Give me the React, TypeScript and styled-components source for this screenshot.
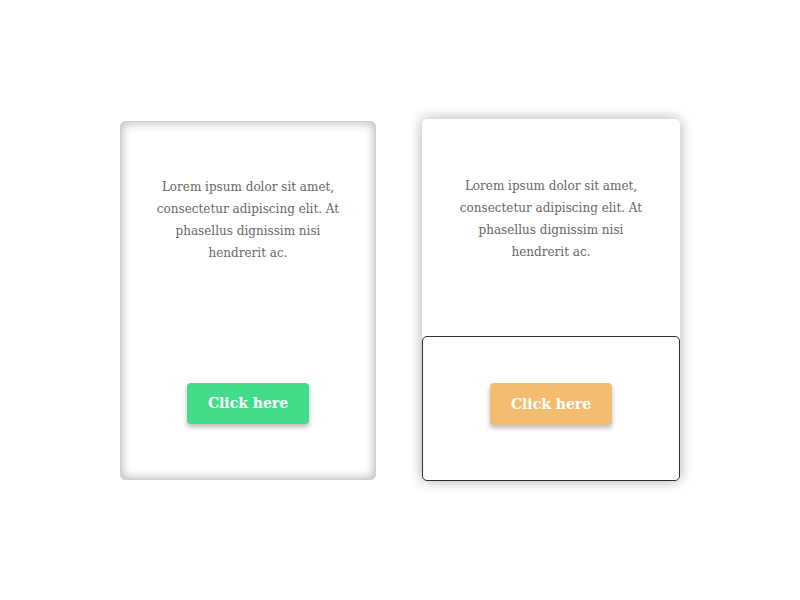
import React from "react";
import styled, { createGlobalStyle } from "styled-components";

const Global = createGlobalStyle`
  html, body { margin: 0; padding: 0; background: #fff; }
  body { font-family: "DejaVu Serif", "Liberation Serif", serif; }
`;

const Page = styled.div`
  width: 800px;
  height: 600px;
  display: flex;
  align-items: center;
  justify-content: center;
  gap: 46px;
`;

const Card = styled.div<{ $variant: "inset" | "raised" }>`
  box-sizing: border-box;
  width: ${(p) => (p.$variant === "inset" ? "256px" : "258px")};
  height: ${(p) => (p.$variant === "inset" ? "359px" : "362px")};
  border-radius: 5px;
  background: #fff;
  display: flex;
  flex-direction: column;
  ${(p) =>
    p.$variant === "inset"
      ? `border: 1px solid #d0d0d0; box-shadow: inset 0 0 11px rgba(0,0,0,0.32);`
      : `box-shadow: 0 0 14px rgba(0,0,0,0.32);`}
`;

const Body = styled.div<{ $top: number }>`
  flex: 1;
  padding: ${(p) => p.$top}px 24px 0;
  display: flex;
  justify-content: center;
`;

const Text = styled.p`
  margin: 0;
  max-width: 200px;
  text-align: center;
  font-size: 12px;
  line-height: 22px;
  color: #666;
`;

const Footer = styled.div<{ $outlined?: boolean }>`
  box-sizing: border-box;
  height: ${(p) => (p.$outlined ? "145px" : "144px")};
  display: flex;
  justify-content: center;
  padding-top: ${(p) => (p.$outlined ? "46px" : "48px")};
  ${(p) =>
    p.$outlined
      ? `border: 1px solid #2e2e38; border-radius: 5px;`
      : ``}
`;

const Button = styled.button<{ $color: string; $tall?: boolean }>`
  width: 122px;
  height: ${(p) => (p.$tall ? "42px" : "41px")};
  border: none;
  border-radius: 4px;
  background: ${(p) => p.$color};
  color: #fff;
  font-family: "DejaVu Serif", "Liberation Serif", serif;
  font-weight: bold;
  font-size: 14px;
  box-shadow: 0 3px 5px rgba(0, 0, 0, 0.28);
  cursor: pointer;
  padding: 0;
`;

const lorem =
  "Lorem ipsum dolor sit amet, consectetur adipiscing elit. At phasellus dignissim nisi hendrerit ac.";

export default function App() {
  return (
    <>
      <Global />
      <Page>
        <Card $variant="inset">
          <Body $top={54}>
            <Text>{lorem}</Text>
          </Body>
          <Footer>
            <Button $color="#43dc8a">Click here</Button>
          </Footer>
        </Card>
        <Card $variant="raised">
          <Body $top={56}>
            <Text>{lorem}</Text>
          </Body>
          <Footer $outlined>
            <Button $color="#f2bd6e" $tall>Click here</Button>
          </Footer>
        </Card>
      </Page>
    </>
  );
}
